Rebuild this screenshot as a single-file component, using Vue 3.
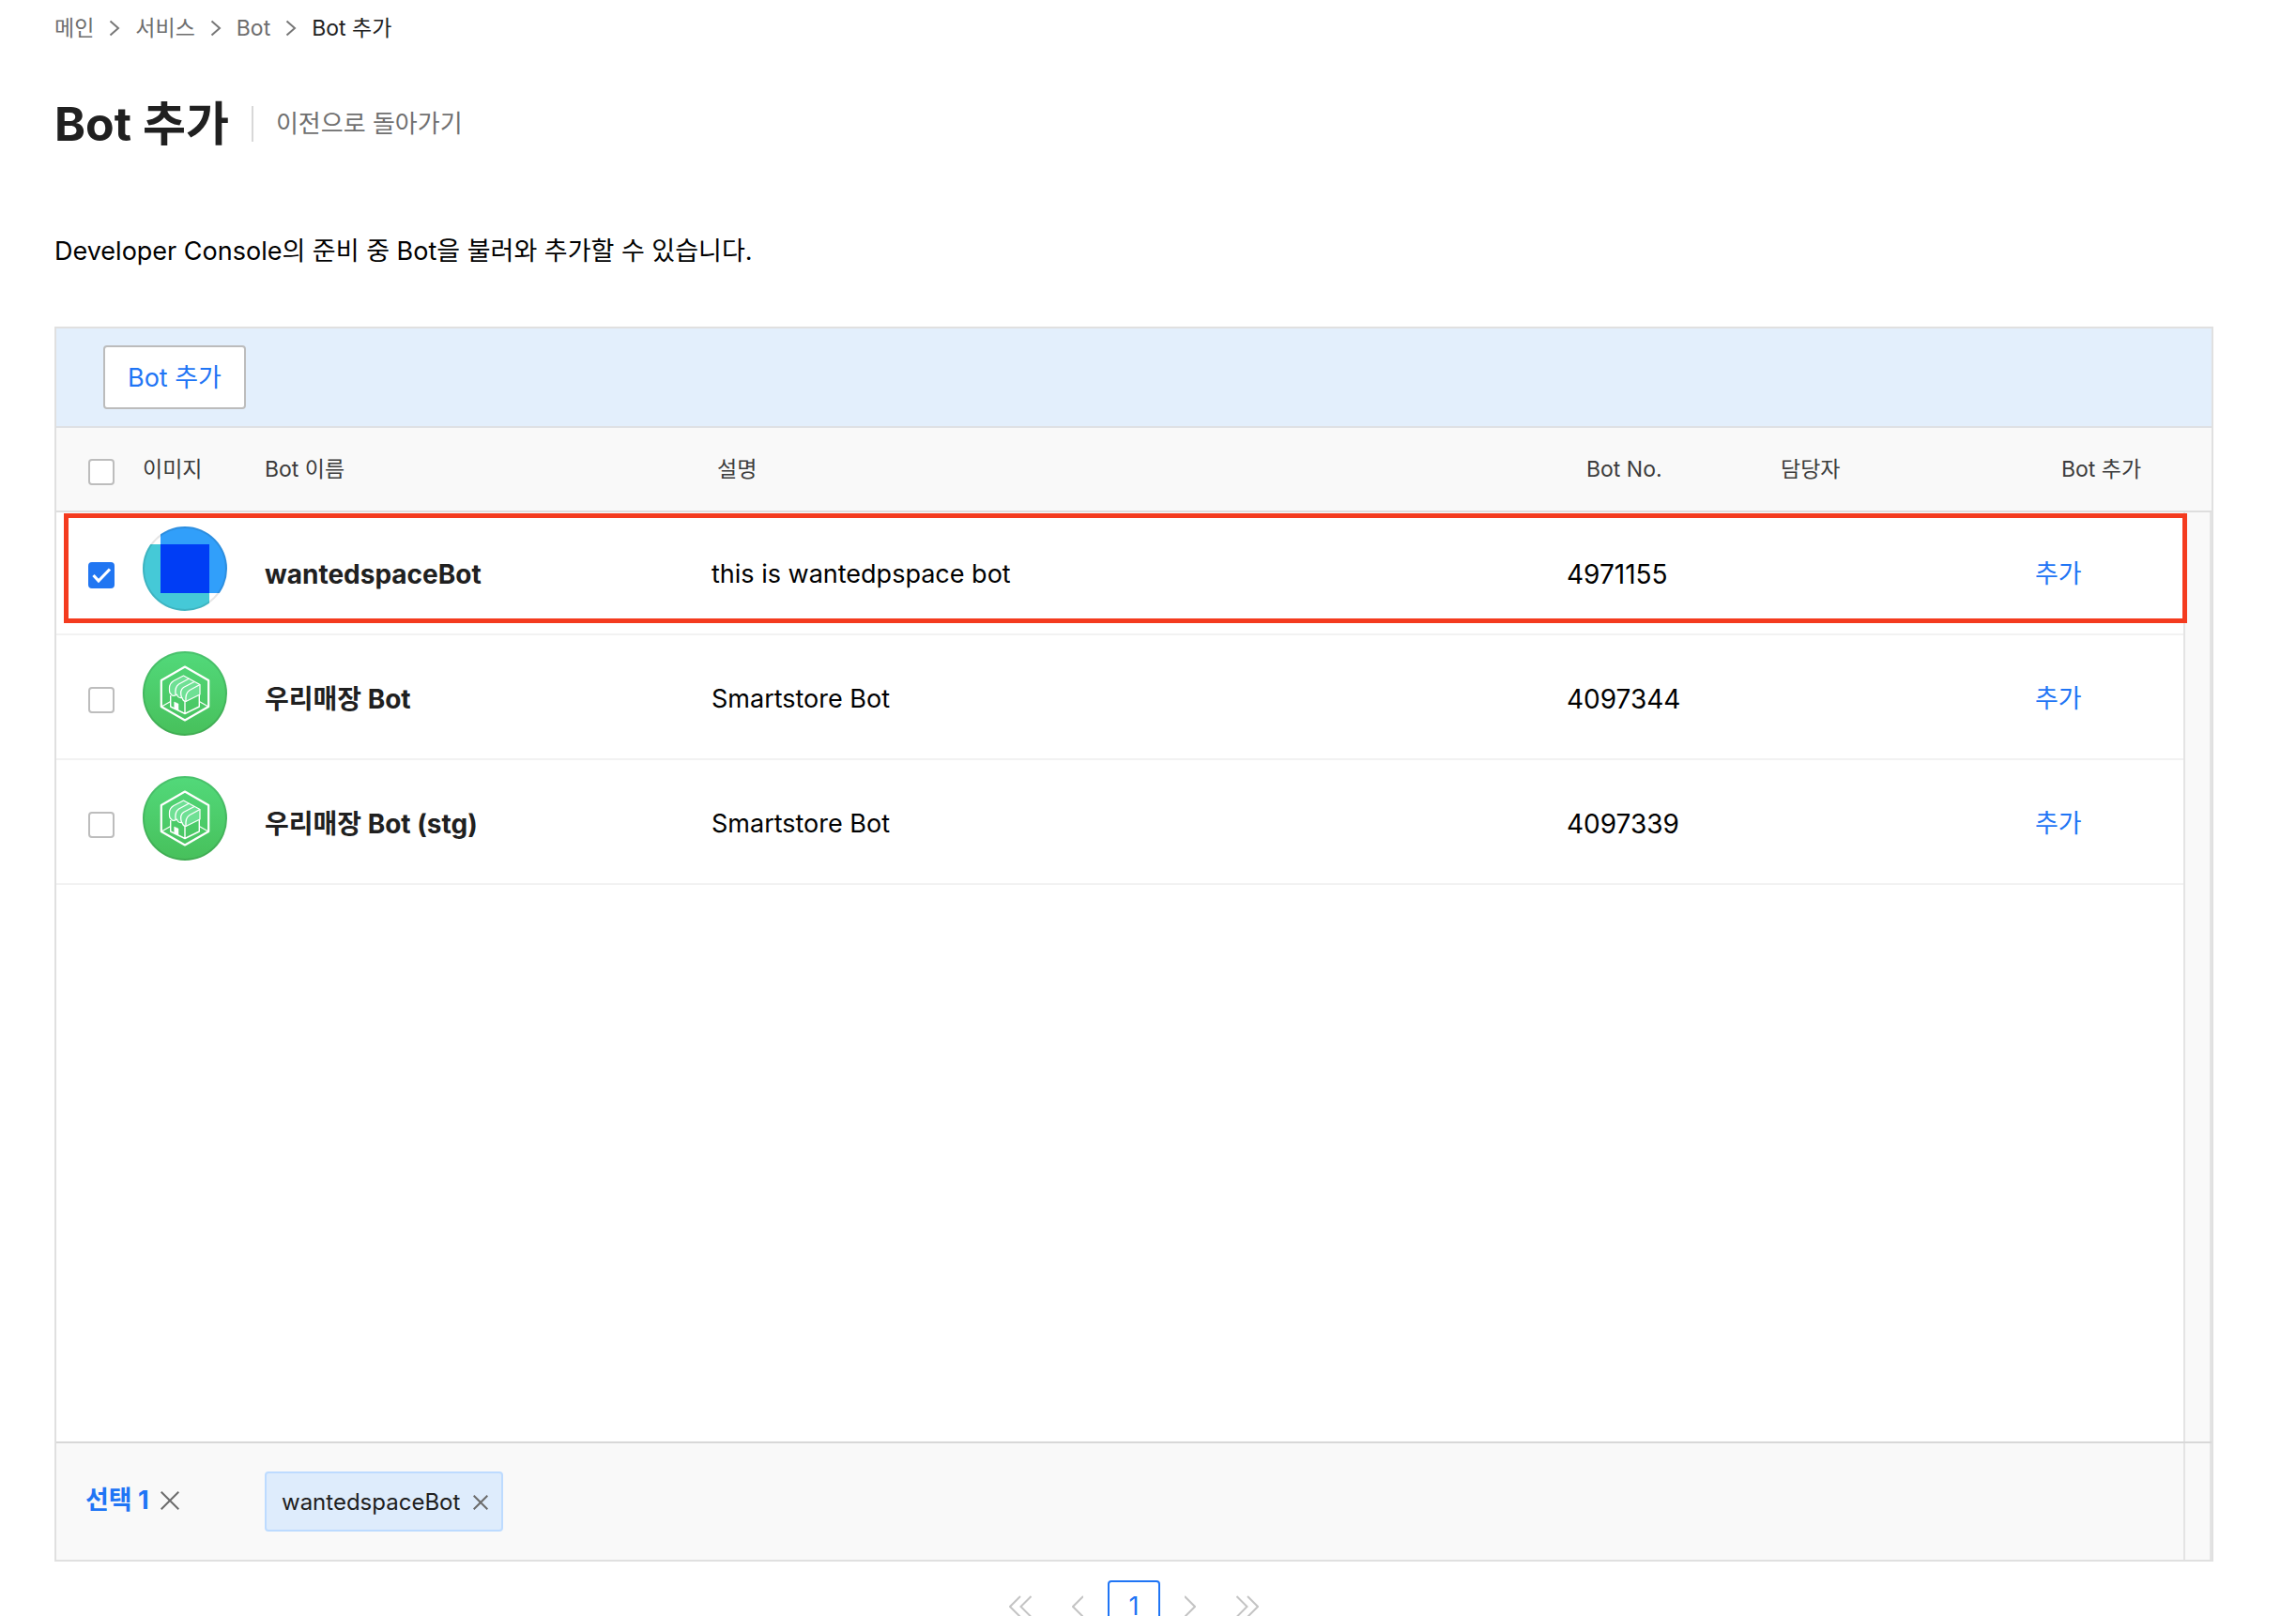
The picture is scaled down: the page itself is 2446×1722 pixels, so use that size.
<script setup>
import { computed, ref } from 'vue'

const crumbs = ['메인', '서비스', 'Bot']

const bots = ref([
  { no: '4971155', name: 'wantedspaceBot', desc: 'this is wantedpspace bot', icon: 'squares', manager: '', checked: true },
  { no: '4097344', name: '우리매장 Bot', desc: 'Smartstore Bot', icon: 'store', manager: '', checked: false },
  { no: '4097339', name: '우리매장 Bot (stg)', desc: 'Smartstore Bot', icon: 'store', manager: '', checked: false }
])

const selected = computed(() => bots.value.filter((bot) => bot.checked))
const allChecked = computed(() => selected.value.length === bots.value.length)

function toggleAll(event) {
  bots.value.forEach((bot) => { bot.checked = event.target.checked })
}

function clearSelection() {
  bots.value.forEach((bot) => { bot.checked = false })
}
</script>

<template>
  <main class="page">
    <nav class="breadcrumb" aria-label="breadcrumb">
      <template v-for="crumb in crumbs" :key="crumb">
        <a href="#">{{ crumb }}</a>
        <svg class="crumb-sep" viewBox="0 0 12 18" aria-hidden="true"><path d="M1.5 1.5 10 9l-8.500 7.500" /></svg>
      </template>
      <span class="current">Bot 추가</span>
    </nav>

    <header class="heading">
      <h1>Bot 추가</h1>
      <a class="back" href="#">이전으로 돌아가기</a>
    </header>

    <p class="intro">Developer Console의 준비 중 Bot을 불러와 추가할 수 있습니다.</p>

    <section class="panel">
      <div class="toolbar">
        <button type="button" class="add-button">Bot 추가</button>
      </div>

      <div class="list">
        <table>
          <colgroup>
            <col class="col-check">
            <col class="col-image">
            <col class="col-name">
            <col>
            <col class="col-no">
            <col class="col-manager">
            <col class="col-add">
          </colgroup>
          <thead>
            <tr>
              <th class="check"><input type="checkbox" aria-label="전체 선택" :checked="allChecked" @change="toggleAll"></th>
              <th>이미지</th>
              <th>Bot 이름</th>
              <th class="head-desc">설명</th>
              <th class="head-no">Bot No.</th>
              <th class="head-no">담당자</th>
              <th class="head-add">Bot 추가</th>
            </tr>
          </thead>
          <tbody>
            <tr v-for="bot in bots" :key="bot.no">
              <td class="check"><input v-model="bot.checked" type="checkbox" :aria-label="bot.name"></td>
              <td class="image">
                <svg v-if="bot.icon === 'squares'" class="avatar" viewBox="0 0 90 90" aria-hidden="true">
                  <defs><clipPath id="round"><circle cx="45" cy="45" r="45" /></clipPath></defs>
                  <g clip-path="url(#round)">
                    <rect width="90" height="90" fill="#fff" />
                    <rect y="19" width="71" height="71" fill="#45c9d7" />
                    <rect x="19" width="71" height="71" fill="#319ffa" />
                    <path d="M71 71h19v19H71ZM0 0h19v19H0Z" fill="#fff" />
                    <rect x="19" y="19" width="52" height="52" fill="#003df5" />
                  </g>
                  <circle cx="45" cy="45" r="44" fill="none" stroke="#000" stroke-opacity=".1" stroke-width="2" />
                </svg>
                <svg v-else class="avatar" viewBox="0 0 90 90" aria-hidden="true">
                  <defs>
                    <linearGradient :id="'green' + bot.no" x1="0" y1="0" x2="0" y2="1">
                      <stop offset="0" stop-color="#52d97a" /><stop offset="1" stop-color="#47c05b" />
                    </linearGradient>
                  </defs>
                  <circle cx="45" cy="45" r="45" :fill="`url(#green${bot.no})`" />
                  <circle cx="45" cy="45" r="44" fill="none" stroke="#000" stroke-opacity=".1" stroke-width="2" />
                  <g fill="none" stroke="#fff" stroke-linejoin="round">
                    <path d="M45 16.500 70.200 31v28L45 73.500 19.800 59V31Z" stroke-width="2.200" />
                    <path d="M20 59l9.700-5.500M70 59l-9.700-5.500" stroke-width="1.200" />
                    <path d="M29.700 47v12L45 66.500 60.300 59V45M45 53v13" stroke-width="1.400" />
                    <path d="M33.700 54l4.300 2v7l-4.300-2Z" fill="#fff" stroke-width=".5" />
                    <path d="M43.500 26 61 35.500V46L46 53.500c-2.500-.3-3.500-2-4-4-3 .5-5-1-5.500-3.500-2 1.500-4.500 2-5.500.500-1.800-1-2.500-2.500-2.500-4.500v-3c0-3.500 2-6 4.500-7.500Z" fill="#6fe094" stroke-width="1.200" />
                    <path d="M49.500 29 38.500 35c-3 2-4.200 5-3.500 11M55 32.500 43.500 38.500c-3 2-3.500 6-2 11M61 35.500 50 41.500c-3.500 2-4.500 6-4 12" stroke-width="1.300" />
                  </g>
                </svg>
              </td>
              <td class="name">{{ bot.name }}</td>
              <td>{{ bot.desc }}</td>
              <td class="number">{{ bot.no }}</td>
              <td>{{ bot.manager }}</td>
              <td><a class="add-link" href="#">추가</a></td>
            </tr>
          </tbody>
        </table>
        <div class="highlight"></div>
        <div class="track"></div>
      </div>

      <footer class="selection">
        <div class="count">
          <strong>선택 {{ selected.length }}</strong>
          <button type="button" class="close" aria-label="선택 해제" @click="clearSelection">
            <svg width="20" height="20" viewBox="0 0 20 20"><path d="M.7.7l18.600 18.600M19.300.7.7 19.300" /></svg>
          </button>
        </div>
        <div class="tags">
          <span v-for="bot in selected" :key="bot.no" class="tag">
            {{ bot.name }}
            <button type="button" class="close" :aria-label="bot.name + ' 해제'" @click="bot.checked = false">
              <svg width="16" height="16" viewBox="0 0 16 16"><path d="M.7.7l14.600 14.600M15.300.7.7 15.300" /></svg>
            </button>
          </span>
        </div>
        <div class="footer-track"></div>
      </footer>
    </section>

    <nav class="pager" aria-label="pagination">
      <button type="button" aria-label="처음"><svg width="24" height="24" viewBox="0 0 24 24"><path d="M12 1 1 12l11 11M23.500 1l-11 11 11 11" /></svg></button>
      <button type="button" aria-label="이전"><svg width="12" height="24" viewBox="0 0 12 24"><path d="M12 1 1 12l11 11" /></svg></button>
      <button type="button" class="page-number" aria-current="page">1</button>
      <button type="button" aria-label="다음"><svg width="12" height="24" viewBox="0 0 12 24"><path d="M0 1l11 11L0 23" /></svg></button>
      <button type="button" aria-label="마지막"><svg width="24" height="24" viewBox="0 0 24 24"><path d="M.5 1l11 11-11 11M12 1l11 11-11 11" /></svg></button>
    </nav>
  </main>
</template>

<style>
body {
  margin: 0;
  background: #fff;
}
</style>

<style scoped>
.page {
  box-sizing: border-box;
  height: 100vh;
  overflow: hidden;
  padding: 14px 88px 0 58px;
  color: #000;
  font-family: Inter, "Noto Sans CJK KR", sans-serif;
  font-size: 27px;
  line-height: 32px;
}

a {
  text-decoration: none;
}

button {
  padding: 0;
  border: 0;
  background: none;
  font: inherit;
  cursor: pointer;
}

svg {
  display: block;
}

.breadcrumb {
  display: flex;
  align-items: center;
  gap: 16px;
  font-size: 23px;
  color: #222;
}

.breadcrumb a {
  color: #6e6e6e;
}

.crumb-sep {
  width: 12px;
  height: 18px;
  fill: none;
  stroke: #777;
  stroke-width: 2;
}

.heading {
  display: flex;
  align-items: center;
  margin-top: 54px;
}

h1 {
  margin: 0;
  font-size: 50px;
  line-height: 64px;
  font-weight: 700;
  color: #202020;
}

.back {
  margin-left: 24px;
  padding-left: 24px;
  border-left: 2px solid #d8d8d8;
  font-size: 26px;
  line-height: 38px;
  color: #707070;
}

.intro {
  margin: 88px 0 64px;
}

.panel {
  border: 2px solid #e0e0e0;
}

.toolbar {
  padding: 18px 50px;
  border-bottom: 2px solid #dfe1e4;
  background: #e3effc;
}

.add-button {
  display: block;
  box-sizing: border-box;
  height: 68px;
  padding: 2px 24px 0;
  border: 2px solid #bcbcbc;
  border-radius: 4px;
  background: #fff;
  color: #1f75f5;
}

.list {
  position: relative;
  height: 1080px;
}

table {
  width: 100%;
  table-layout: fixed;
  border-collapse: separate;
  border-spacing: 0;
}

.col-check { width: 92px; }
.col-image { width: 130px; }
.col-name { width: 476px; }
.col-no { width: 207px; }
.col-manager { width: 292px; }
.col-add { width: 188px; }

th,
td {
  box-sizing: border-box;
  padding: 0;
  text-align: left;
  vertical-align: middle;
}

th {
  position: relative;
  height: 88px;
  background: #f9f9f9;
  box-shadow: 0 2px 0 #dedede;
  font-size: 23px;
  font-weight: 400;
  color: #3c3c3c;
}

td {
  height: 133px;
  padding-top: 4px;
  border-bottom: 2px solid #f2f2f2;
}

.head-desc { padding-left: 6px; }
.head-no { padding-left: 21px; }
.head-add { padding-left: 28px; }

.check {
  padding: 6px 0 0 34px;
}

.check input {
  display: block;
  appearance: none;
  box-sizing: border-box;
  width: 28px;
  height: 28px;
  margin: 0;
  border: 2px solid #bdbdbd;
  border-radius: 4px;
  background: #fff;
}

.check input:checked {
  border-color: #2176f2;
  background: #2176f2 url("data:image/svg+xml,%3Csvg xmlns='http://www.w3.org/2000/svg' viewBox='0 0 24 24'%3E%3Cpath d='M3.500 12l5.500 6L21 5.500' fill='none' stroke='white' stroke-width='3.200'/%3E%3C/svg%3E") center / 24px no-repeat;
}

.image {
  padding: 0 0 8px;
}

.avatar {
  width: 90px;
  height: 90px;
}

.name {
  font-size: 28px;
  font-weight: 700;
  color: #202020;
}

.number {
  font-size: 28px;
}

.add-link {
  color: #1f75f5;
}

/* Marks the row to pick; floats above the table */
.highlight {
  position: absolute;
  z-index: 2;
  top: 91px;
  left: 8px;
  right: 26px;
  box-sizing: border-box;
  height: 117px;
  border: 5px solid #f43b1f;
}

.track {
  position: absolute;
  top: 90px;
  right: 0;
  bottom: 0;
  box-sizing: border-box;
  width: 30px;
  border: solid #e4e4e4;
  border-width: 0 2px;
  background: #f9f9f9;
}

.selection {
  display: flex;
  align-items: center;
  height: 124px;
  border-top: 2px solid #d8d8d8;
  background: #f9f9f9;
}

.count {
  display: flex;
  align-items: center;
  gap: 12px;
  box-sizing: border-box;
  width: 222px;
  padding: 0 0 2px 31px;
}

.count strong {
  font-weight: 700;
  color: #1f75f5;
}

.close svg {
  fill: none;
  stroke: #6c6c6c;
  stroke-width: 2;
}

.tags {
  display: flex;
  flex: 1;
  gap: 12px;
}

.tag {
  display: flex;
  align-items: center;
  gap: 14px;
  box-sizing: border-box;
  height: 64px;
  padding: 2px 14px 0 16px;
  border: 2px solid #bddbff;
  border-radius: 4px;
  background: #deecfc;
  font-size: 24px;
  color: #202020;
}

.footer-track {
  align-self: stretch;
  box-sizing: border-box;
  width: 30px;
  border: solid #e4e4e4;
  border-width: 0 2px;
}

.pager {
  display: flex;
  align-items: center;
  justify-content: center;
  gap: 43px;
  margin-top: 20px;
}

.pager svg {
  fill: none;
  stroke: #c4c4c4;
  stroke-width: 2;
}

.page-number {
  box-sizing: border-box;
  width: 56px;
  height: 56px;
  margin: 0 -17px;
  border: 2px solid #1f75f5;
  border-radius: 4px;
  color: #1f75f5;
}
</style>
